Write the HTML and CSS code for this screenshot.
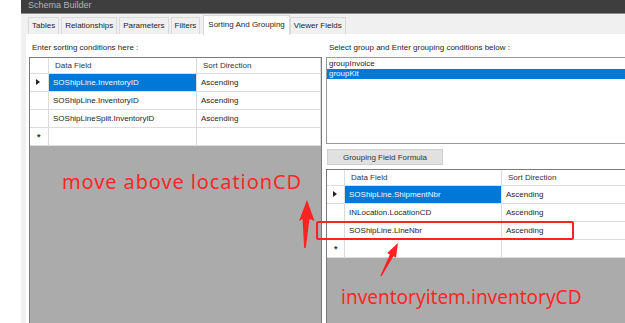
FILE: index.html
```html
<!DOCTYPE html>
<html lang="en">
<head>
    <meta charset="UTF-8">
    <title>Schema Builder</title>
    <link rel="stylesheet" href="styles.css">
</head>
<body>

<div class="window">
    <div class="titlebar">Schema Builder</div>

    <div class="tabstrip">
        <div class="tab">Tables</div>
        <div class="tab">Relationships</div>
        <div class="tab">Parameters</div>
        <div class="tab">Filters</div>
        <div class="tab selected">Sorting And Grouping</div>
        <div class="tab">Viewer Fields</div>
    </div>

    <div class="page">
        <!-- Sorting side -->
        <div class="left-col">
            <div class="label">Enter sorting conditions here :</div>
            <div class="grid sort-grid">
                <div class="row head">
                    <div class="cell rh"></div>
                    <div class="cell">Data Field</div>
                    <div class="cell">Sort Direction</div>
                </div>
                <div class="row">
                    <div class="cell rh"><span class="current"></span></div>
                    <div class="cell picked">SOShipLine.InventoryID</div>
                    <div class="cell">Ascending</div>
                </div>
                <div class="row">
                    <div class="cell rh"></div>
                    <div class="cell">SOShipLine.InventoryID</div>
                    <div class="cell">Ascending</div>
                </div>
                <div class="row">
                    <div class="cell rh"></div>
                    <div class="cell">SOShipLineSplit.InventoryID</div>
                    <div class="cell">Ascending</div>
                </div>
                <div class="row">
                    <div class="cell rh"><span class="star">*</span></div>
                    <div class="cell"></div>
                    <div class="cell"></div>
                </div>
            </div>
        </div>

        <!-- Grouping side -->
        <div class="right-col">
            <div class="label">Select group and Enter grouping conditions below :</div>
            <div class="listbox">
                <div class="item">groupInvoice</div>
                <div class="item picked">groupKit</div>
            </div>
            <button class="formula-btn">Grouping Field Formula</button>
            <div class="grid group-grid">
                <div class="row head">
                    <div class="cell rh"></div>
                    <div class="cell">Data Field</div>
                    <div class="cell">Sort Direction</div>
                </div>
                <div class="row">
                    <div class="cell rh"><span class="current"></span></div>
                    <div class="cell picked">SOShipLine.ShipmentNbr</div>
                    <div class="cell">Ascending</div>
                </div>
                <div class="row">
                    <div class="cell rh"></div>
                    <div class="cell">INLocation.LocationCD</div>
                    <div class="cell">Ascending</div>
                </div>
                <div class="row">
                    <div class="cell rh"></div>
                    <div class="cell">SOShipLine.LineNbr</div>
                    <div class="cell">Ascending</div>
                </div>
                <div class="row">
                    <div class="cell rh"><span class="star">*</span></div>
                    <div class="cell"></div>
                    <div class="cell"></div>
                </div>
            </div>
        </div>
    </div>
</div>

<!-- Red annotations drawn over the screenshot -->
<div class="note note-move">move above locationCD</div>
<div class="note note-item">inventoryitem.inventoryCD</div>
<div class="mark-box"></div>
<svg class="arrows" width="625" height="323" viewBox="0 0 625 323">
    <polygon points="307,200 314.5,221 309.5,219 305.8,248 304.2,248 302.5,219 299,221" fill="#ff2222"/>
    <polygon points="398,243 396,257.7 393.4,256.3 381.6,276.3 380.4,275.7 389.8,254.5 387.2,253.1" fill="#ff2222"/>
</svg>

</body>
</html>
```

FILE: styles.css
```css
body {
    margin: 0;
    background: #fff;
    font-family: "Liberation Sans", Arial, sans-serif;
    font-size: 8px;
    color: #1e1e1e;
    overflow: hidden;
    position: relative;
    height: 323px;
}
.window {
    margin-left: 21px;
    width: 640px;
    height: 323px;
    background: #f0f0f0;
    display: flex;
    flex-direction: column;
}
.titlebar {
    height: 13px;
    background: #3e3e3e;
    color: #b4b4b4;
    font-size: 9px;
    line-height: 10px;
    padding-left: 7px;
    overflow: hidden;
    border-bottom: 1px solid #8a8a8a;
}
.tabstrip {
    height: 20px;
    display: flex;
    align-items: flex-end;
    padding-left: 7px;
}
.tab {
    height: 16px;
    line-height: 16px;
    padding: 0 3px;
    margin-right: 2px;
    border: 1px solid #d9d9d9;
    border-bottom: none;
    background: #f0f0f0;
}
.tab.selected {
    height: 19px;
    line-height: 17px;
    padding: 0 4px;
    background: #fff;
    margin: 0 0 0 1px;
    position: relative;
    top: 1px;
}
.page {
    flex: 1;
    margin-left: 5px;
    background: #fff;
    display: flex;
    gap: 4px;
    min-height: 0;
}
.left-col {
    width: 293px;
    padding-left: 3px;
    display: flex;
    flex-direction: column;
}
.right-col {
    flex: 1;
    display: flex;
    flex-direction: column;
}
.label {
    height: 10px;
    line-height: 10px;
    margin: 9px 0 4px 3px;
}
.grid {
    flex: 1;
    background: #ababab;
    border: 1px solid #7a7a7a;
    border-bottom: none;
}
.right-col .grid {
    border-right: none;
}
.row {
    display: grid;
    height: 17px;
    background: #fff;
    border-bottom: 1px solid #dcdcdc;
}
.row.head {
    height: 15px;
}
.sort-grid .row {
    grid-template-columns: 19px 148px 1fr;
}
.group-grid .row {
    grid-template-columns: 18px 157px 1fr;
}
.cell {
    line-height: 17px;
    padding-left: 4px;
    border-right: 1px solid #dcdcdc;
    white-space: nowrap;
    overflow: hidden;
    position: relative;
}
.head .cell {
    line-height: 16px;
    padding-left: 6px;
    color: #333;
}
.cell.rh {
    padding-left: 0;
}
.cell.picked {
    background: #0078d7;
    color: #f4f8ff;
}
.current {
    position: absolute;
    left: 6px;
    top: 5px;
    border-left: 4px solid #222;
    border-top: 3.5px solid transparent;
    border-bottom: 3.5px solid transparent;
}
.star {
    position: absolute;
    left: 7px;
    top: 1px;
    font-size: 9px;
    font-weight: bold;
    color: #333;
}
.listbox {
    height: 84px;
    border: 1px solid #9a9a9a;
    border-right: none;
    padding-top: 1px;
}
.item {
    height: 10px;
    line-height: 10px;
    padding-left: 2px;
}
.item.picked {
    background: #0078d7;
    color: #f4f8ff;
}
.formula-btn {
    width: 116px;
    height: 16px;
    margin: 5px 0 4px 1px;
    padding: 0;
    font-family: "Liberation Sans", Arial, sans-serif;
    font-size: 8px;
    color: #333;
    background: #e1e1e1;
    border: 1px solid #d0d0d0;
}
.note {
    position: absolute;
    color: #ff2626;
    font-family: "Noto Sans", "Noto Sans CJK SC", sans-serif;
    font-size: 19px;
    line-height: 20px;
    white-space: nowrap;
}
.note-move {
    left: 62px;
    top: 172px;
    font-size: 20px;
    letter-spacing: 0.9px;
}
.note-item {
    left: 341px;
    top: 287px;
}
.mark-box {
    position: absolute;
    left: 316px;
    top: 221px;
    width: 254px;
    height: 15px;
    border: 2px solid #ff2222;
    border-radius: 2px;
}
.arrows {
    position: absolute;
    left: 0;
    top: 0;
}
```
